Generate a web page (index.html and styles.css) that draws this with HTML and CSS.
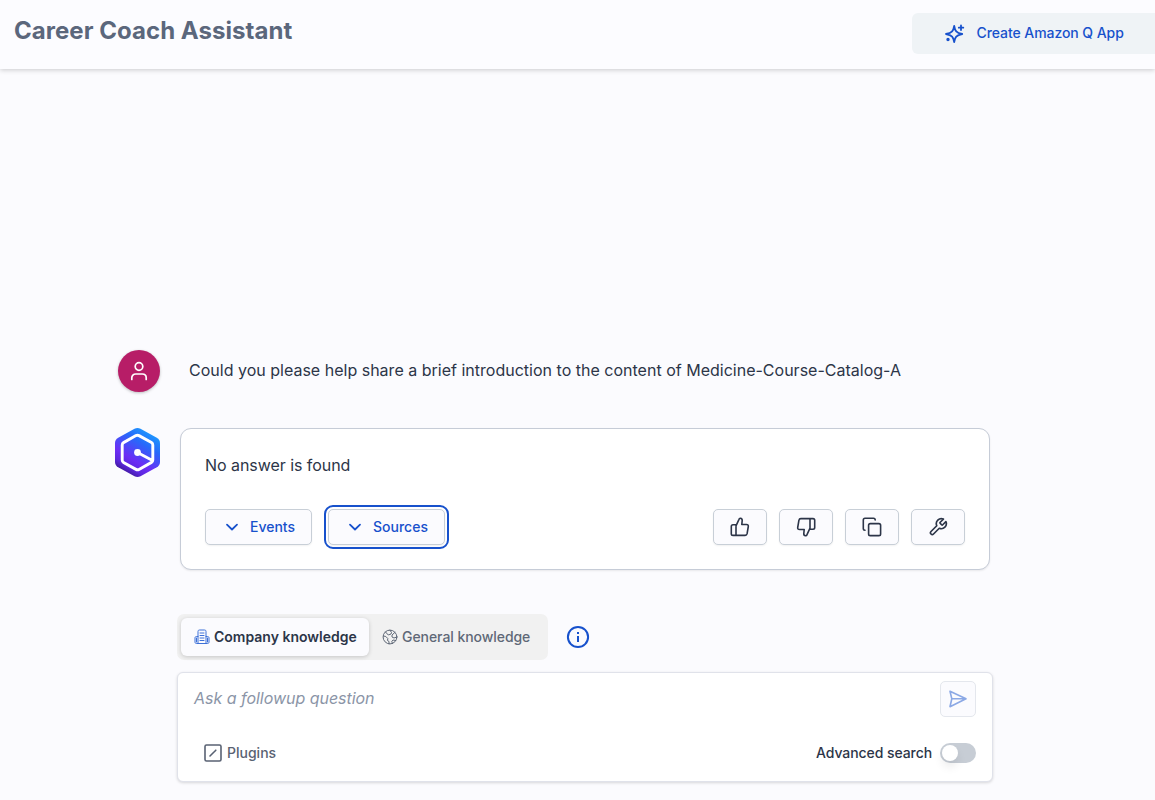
FILE: index.html
```html
<!DOCTYPE html>
<html lang="en">
<head>
<meta charset="utf-8">
<title>Career Coach Assistant</title>
<link rel="stylesheet" href="styles.css">
</head>
<body>
<div class="app">
  <header class="header">
    <h1 class="title">Career Coach Assistant</h1>
    <button class="create">
      <svg class="icon" width="20" height="20" viewBox="0 0 20 20" stroke-width="1.8"><path d="M9.2 1.8c.8 5 2 6.900 8 8.200-6 1.200-7.200 3-8 8-.8-5-2-6.800-8.200-8 6.200-1.300 7.400-3.200 8.200-8.200zM16 1.500v4.500M13.800 3.700h4.500"/><circle cx="3" cy="15.500" r=".8" fill="currentColor"/></svg>
      <span class="label">Create Amazon Q App</span>
    </button>
  </header>
  <main class="chat">
    <div class="question">
      <div class="avatar">
        <svg class="icon" width="20" height="20" viewBox="0 0 20 20" stroke-width="1.7"><circle cx="10" cy="5.500" r="3.800"/><path d="M2.800 18.500v-1.700c0-2.300 1.600-3.800 3.900-3.800h6.600c2.300 0 3.900 1.500 3.900 3.800v1.700"/></svg>
      </div>
      <p class="question-text">Could you please help share a brief introduction to the content of Medicine-Course-Catalog-A</p>
    </div>
    <div class="answer">
      <svg class="logo" width="45" height="49" viewBox="0 0 45 49">
        <defs><linearGradient id="g" x1=".78" y1=".02" x2=".22" y2="1"><stop offset="0" stop-color="#1aa2ff"/><stop offset=".3" stop-color="#2869fa"/><stop offset=".65" stop-color="#6c2df5"/><stop offset=".8" stop-color="#5c27de"/><stop offset="1" stop-color="#32127a"/></linearGradient></defs>
        <path fill="url(#g)" d="M19.500.8q3-1.600 6 0l16.300 9q3.200 1.800 3.200 5.400v18.600q0 3.600-3.200 5.400l-16.300 9q-3 1.600-6 0l-16.300-9Q0 37.400 0 33.800V15.200q0-3.600 3.200-5.400z"/>
        <path d="M22.500 24.500 37.500 32.500M21 7.600q1.500-.8 3 0l12.500 7q1.300.7 1.300 2.300v15.200q0 1.600-1.300 2.300L24 41.400q-1.500.8-3 0L8.500 34.400q-1.300-.7-1.300-2.300V16.900q0-1.600 1.300-2.300z" fill="none" stroke="#fff" stroke-width="2.900"/>
        <circle cx="22.500" cy="24.500" r="3.400" fill="#fff"/>
      </svg>
      <section class="card">
        <p class="card-text">No answer is found</p>
        <div class="actions">
          <button class="btn events"><svg class="icon" width="14" height="10" viewBox="0 0 14 10" stroke-width="1.800"><path d="M2 2.700 7 7.500l5-4.800"/></svg><span class="label">Events</span></button>
          <button class="btn sources"><svg class="icon" width="14" height="10" viewBox="0 0 14 10" stroke-width="1.800"><path d="M2 2.700 7 7.500l5-4.800"/></svg><span class="label">Sources</span></button>
          <div class="tools">
            <button class="btn tool"><svg class="icon" width="20" height="20" viewBox="0 0 20 20" stroke-width="1.600"><path d="M6 8.800 9 2.300c.3-.9.700-1.200 1.400-1.100 1.200.2 1.900 1.100 1.800 2.300L11.800 7.500h4.700c1.300 0 2 .8 1.800 2l-1.200 7.200c-.2 1-1 1.700-2 1.700H3c-1 0-1.700-.7-1.700-1.700V9.500c0-1 .7-1.700 1.700-1.700h3.300M6 8.800v9.600"/></svg></button>
            <button class="btn tool"><svg class="icon" width="20" height="20" viewBox="0 0 20 20" stroke-width="1.600"><path d="m14 11.200-3 6.500c-.3.900-.7 1.200-1.400 1.100-1.200-.2-1.900-1.100-1.800-2.300l.4-4H3.500c-1.300 0-2-.8-1.800-2l1.200-7.200c.2-1 1-1.700 2-1.700H17c1 0 1.700.7 1.700 1.700v7.200c0 1-.7 1.700-1.700 1.700h-3.300M14 11.200V1.600"/></svg></button>
            <button class="btn tool"><svg class="icon" width="20" height="20" viewBox="0 0 20 20" stroke-width="1.600"><rect x="6.600" y="6.600" width="12" height="12" rx="1.700"/><path d="M3 13.200c-1 0-1.700-.7-1.700-1.700V3c0-1 .7-1.700 1.700-1.700h8.500c1 0 1.700.7 1.700 1.700"/></svg></button>
            <button class="btn tool"><svg class="icon" width="20" height="20" viewBox="0 0 24 24" stroke-width="2"><path d="M14.700 6.300a1 1 0 0 0 0 1.400l1.600 1.600a1 1 0 0 0 1.400 0l3.770-3.770a6 6 0 0 1-7.940 7.940l-6.910 6.910a2.120 2.120 0 0 1-3-3l6.910-6.910a6 6 0 0 1 7.940-7.940z"/></svg></button>
          </div>
        </div>
      </section>
    </div>
    <div class="modes">
      <div class="tabs">
        <button class="tab active"><svg class="icon building" width="16" height="16" viewBox="0 0 16 16" stroke-width="1"><path d="M4 14.500V2.500C4 1.500 4.500 1 5.500 1h5c1 0 1.500.5 1.500 1.500v12M4 7.500H2.500C1.500 7.500 1 8 1 9v4c0 1 .5 1.500 1.500 1.500h11c1 0 1.500-.5 1.500-1.500V9c0-1-.5-1.500-1.500-1.500H12M6 4h4M6 6.500h4M6 9h4M6 11.500h4M2.500 9v4M13.500 9v4"/></svg><span class="label">Company knowledge</span></button>
        <button class="tab general"><svg class="icon" width="16" height="16" viewBox="0 0 16 16" stroke-width="1"><circle cx="8" cy="8" r="6.900"/><path d="M1.500 7 3.800 7.500l2 2L5.500 11.500 7 12.500v2.400M3.500 3l2.800 3 2.700-1L9.500 3.500 8 1.200M13 3.300 10 6v2l2 1 2.800-1M13.800 11.500l-2.800-.5-1.200 1.500.7 2"/></svg><span class="label">General knowledge</span></button>
      </div>
      <svg class="icon blue" width="24" height="24" viewBox="0 0 24 24" stroke-width="2"><circle cx="12" cy="12" r="10.100"/><path d="M12 11v6M12 7v2" stroke-linecap="butt"/></svg>
    </div>
    <section class="composer">
      <div class="row top">
        <span class="placeholder">Ask a followup question</span>
        <button class="btn send"><svg class="icon" width="20" height="20" viewBox="0 0 20 20" stroke-width="1.600"><path d="M2 2.300 18 9.800 2 17.700l1.800-7.900zM3.800 9.800H18"/></svg></button>
      </div>
      <div class="row bottom">
        <button class="plugins"><svg class="icon" width="18" height="18" viewBox="0 0 18 18" stroke-width="1.600"><rect x="1" y="1" width="16" height="16" rx="1.500"/><path d="m6 12 5.800-5.800"/></svg><span class="label">Plugins</span></button>
        <div class="advanced"><span class="label">Advanced search</span><span class="switch"><span class="knob"></span></span></div>
      </div>
    </section>
  </main>
</div>
</body>
</html>
```
FILE: styles.css
```css
* { box-sizing: border-box; }
body { margin: 0; background: #fbfbfe; color: #2c3548; font-family: Inter, sans-serif; overflow: hidden; }
button { font: inherit; color: inherit; border: 0; background: none; padding: 0; display: flex; align-items: center; white-space: nowrap; }
p, h1 { margin: 0; white-space: nowrap; }
.app { height: 800px; overflow: hidden; }
.icon { fill: none; stroke: currentColor; stroke-linecap: round; stroke-linejoin: round; flex: none; }
.label { padding-bottom: 2px; }
.blue { color: #1751cc; }
.building { color: #3d70d8; }
.header { height: 69px; padding: 13px 0 0 14px; display: flex; justify-content: space-between; align-items: flex-start; box-shadow: 0 1px 5px rgba(0, 0, 0, .2); background: #fcfcff; }
.title { font-size: 24px; line-height: 36px; font-weight: 700; color: #5b677c; letter-spacing: .04px; }
.create { width: 243.500px; height: 41px; padding-left: 33px; gap: 12px; background: #eff3f6; border-radius: 6px 0 0 6px; color: #1751cc; font-size: 14px; font-weight: 550; letter-spacing: -.07px; }
.chat { padding: 281px 162px 0 115px; }
.question { display: flex; align-items: center; gap: 29px; padding-left: 3px; height: 42px; }
.avatar { width: 42px; height: 42px; border-radius: 50%; background: #b71d67; color: #fff; display: flex; align-items: center; justify-content: center; box-shadow: 0 1px 3px rgba(0, 0, 0, .25); }
.question-text, .card-text { font-size: 16px; line-height: 24px; }
.question-text { padding-bottom: 2px; letter-spacing: .008px; }
.card-text { letter-spacing: -.05px; }
.answer { display: flex; align-items: flex-start; gap: 20px; margin-top: 36px; }
.logo { flex: none; }
.card { width: 810px; height: 142px; padding: 24px; background: #fff; border: 1px solid #c6ccd7; border-radius: 11px; box-shadow: 0 1px 2px rgba(0, 0, 0, .08); }
.actions { display: flex; align-items: center; margin-top: 32px; font-size: 14px; font-weight: 550; letter-spacing: -.07px; color: #1751cc; }
.btn { height: 36px; justify-content: center; background: #fbfbfe; border: 1px solid #c8cfd7; border-radius: 5px; box-shadow: 0 1px 2px rgba(0, 0, 0, .06); }
.events { width: 107px; gap: 11px; padding-left: 3px; }
.sources { width: 117px; gap: 11px; padding-left: 3px; margin-left: 16px; outline: 2px solid #1751cc; outline-offset: 2px; }
.tools { display: flex; gap: 12px; margin-left: auto; color: #2c3548; }
.tool { width: 54px; }
.modes { display: flex; align-items: center; gap: 18px; margin: 44px 0 0 62px; }
.tabs { display: flex; width: 371px; height: 46px; padding: 4px; border-radius: 7px; background: #f1f1f1; font-size: 14px; }
.tab { height: 38px; gap: 4px; padding-left: 13px; font-weight: 600; }
.active { width: 188px; background: #fbfbfe; border-radius: 6px; box-shadow: 0 1px 4px rgba(0, 0, 0, .18); }
.general { font-weight: 550; letter-spacing: -.06px; color: #5f6877; }
.composer { width: 816px; height: 110px; margin: 12px 0 0 62px; padding: 8px 16px 16px; background: #fff; border: 1px solid #e0e2ea; border-radius: 6px; box-shadow: 0 1px 3px rgba(0, 0, 0, .15); }
.row { display: flex; justify-content: space-between; }
.placeholder { font-size: 16px; line-height: 34px; font-style: italic; color: #8b95a7; letter-spacing: -.03px; }
.send { width: 36px; color: #8ba8e5; border-color: #e4e7ed; box-shadow: none; }
.bottom { margin-top: 26px; align-items: center; font-size: 14px; font-weight: 550; letter-spacing: -.07px; }
.plugins { margin-left: 10px; gap: 5px; color: #596273; }
.advanced { display: flex; align-items: center; gap: 8px; }
.switch { width: 36px; height: 20px; border-radius: 10px; padding: 2px; background: #c7cdd5; }
.knob { display: block; width: 16px; height: 16px; border-radius: 50%; background: #fff; box-shadow: 0 6px 10px rgba(0, 0, 0, .08); }
```
